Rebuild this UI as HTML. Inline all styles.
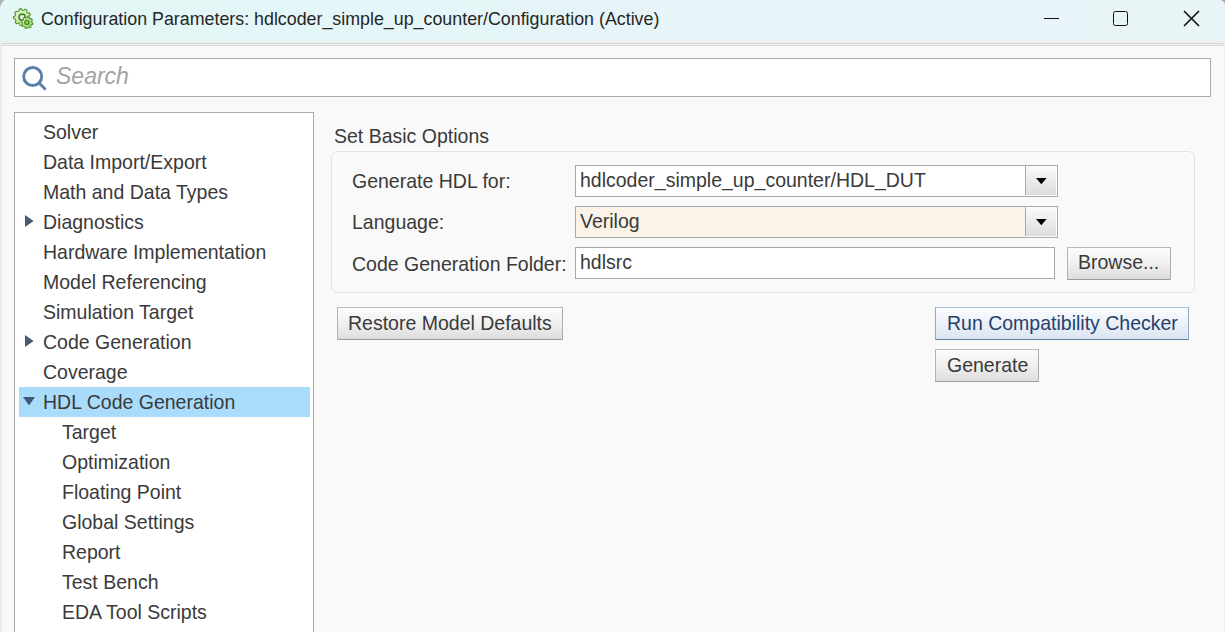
<!DOCTYPE html>
<html><head><meta charset="utf-8">
<style>
*{box-sizing:border-box;margin:0;padding:0}
html,body{width:1225px;height:632px;overflow:hidden}
body{position:relative;background:#f9f9f9;font-family:"Liberation Sans",sans-serif;color:#3a3a3a}
.a{position:absolute;white-space:pre}
.t{font-size:21px;line-height:normal;transform:scaleX(0.9286);transform-origin:0 0;margin-top:-1.36px}
#title{position:absolute;left:-1px;top:0;width:1229px;height:41px;background:linear-gradient(90deg,#e3f7f7 0%,#e4f6f7 35%,#e7f4f8 55%,#e9f4f7 100%)}
#band{position:absolute;left:0;top:41px;width:1225px;height:5px;background:#eeeeee}
#bandbox{position:absolute;left:2px;top:43px;width:1221px;height:3px;border:1px solid #d6d6d6;background:#f2f2f2}
#lstrip{position:absolute;left:0;top:41px;width:2px;height:591px;background:#ececec}
#rstrip{position:absolute;left:1224px;top:41px;width:1px;height:591px;background:#f0f0f0}
#search{position:absolute;left:14px;top:58px;width:1197px;height:39px;background:#fff;border:1px solid #aaaaaa}
#tree{position:absolute;left:14px;top:112px;width:300px;height:540px;background:#fff;border:1px solid #acacac}
#sel{position:absolute;left:19px;top:387px;width:291px;height:30px;background:#a9dbfa}
.tri{position:absolute;width:0;height:0}
#group{position:absolute;left:331px;top:151px;width:864px;height:142px;border:1px solid #e2e2e2;border-radius:6.5px}
.field{position:absolute;background:#fff;border:1px solid #a9a9a9}
.ddbtn{position:absolute;top:0;right:1px;width:31px;height:29px;border-left:1px solid #a9a9a9;background:linear-gradient(#fbfbfb,#dcdcdc);box-shadow:1px 1px 0 #fdfdfd}
.btn{position:absolute;border:1px solid #adadad;border-color:#b9b9b9 #adadad #9c9c9c #b3b3b3;background:linear-gradient(#fcfcfc 0%,#f0f0f0 50%,#dddddd 100%)}
</style></head><body>
<div id="title">
  <svg class="a" style="left:13px;top:7px" width="22" height="22" viewBox="0 0 22 22">
    <defs><linearGradient id="gg" x1="0" y1="0" x2="1" y2="1"><stop offset="0" stop-color="#f4fbe8"/><stop offset="1" stop-color="#b4de7a"/></linearGradient>
    <linearGradient id="gs" x1="0" y1="0" x2="1" y2="1"><stop offset="0" stop-color="#eef9dc"/><stop offset="1" stop-color="#9cd24e"/></linearGradient></defs><g transform="translate(0.4,0.8)">
    <path d="M16.68 9.94 L18.16 10.95 L17.56 12.90 L15.76 12.90 L14.70 14.30 L15.18 16.03 L13.47 17.13 L12.10 15.98 L10.38 16.37 L9.64 18.00 L7.62 17.74 L7.31 15.98 L5.75 15.18 L4.13 15.95 L2.74 14.46 L3.64 12.90 L2.96 11.28 L1.22 10.84 L1.12 8.80 L2.81 8.19 L3.32 6.51 L2.28 5.05 L3.51 3.43 L5.20 4.04 L6.67 3.09 L6.81 1.30 L8.80 0.85 L9.70 2.40 L11.44 2.62 L12.70 1.34 L14.51 2.27 L14.20 4.04 L15.39 5.32 L17.18 5.15 L17.97 7.03 L16.59 8.18Z" fill="url(#gg)" stroke="#4f9a2e" stroke-width="1.1" stroke-linejoin="round"/>
    <circle cx="9.7" cy="9.4" r="3.1" fill="#e6f6ef" stroke="#3d8a2a" stroke-width="1.6"/>
    <path d="M19.39 14.56 L20.59 15.19 L20.27 16.73 L18.93 16.85 L18.19 17.95 L18.59 19.24 L17.28 20.11 L16.24 19.24 L14.94 19.49 L14.31 20.69 L12.77 20.37 L12.65 19.03 L11.55 18.29 L10.26 18.69 L9.39 17.38 L10.26 16.34 L10.01 15.04 L8.81 14.41 L9.13 12.87 L10.47 12.75 L11.21 11.65 L10.81 10.36 L12.12 9.49 L13.16 10.36 L14.46 10.11 L15.09 8.91 L16.63 9.23 L16.75 10.57 L17.85 11.31 L19.14 10.91 L20.01 12.22 L19.14 13.26Z" fill="url(#gs)" stroke="#4f9a2e" stroke-width="1.1" stroke-linejoin="round"/>
    <circle cx="14.5" cy="14.6" r="2.1" fill="#9cd84c" stroke="#3d8a2a" stroke-width="1.3"/>
  </g></svg>
  <div class="a" style="left:42px;top:8.5px;font-size:17.84px;color:#262626">Configuration Parameters: hdlcoder_simple_up_counter/Configuration (Active)</div>
  <div class="a" style="left:1045px;top:17.6px;width:15px;height:1.5px;background:#111"></div>
  <div class="a" style="left:1114px;top:11px;width:15px;height:15px;border:1.6px solid #111;border-radius:2.5px"></div>
  <svg class="a" style="left:1184px;top:10px" width="17" height="17" viewBox="0 0 17 17"><path d="M1 1L16 16M16 1L1 16" stroke="#111" stroke-width="1.6"/></svg>
</div>
<svg class="a" style="left:0;top:0" width="1225" height="12" viewBox="0 0 1225 12"><path d="M0 0H5Q1.2 1.6 0 8Z" fill="#b0b0b0"/><path d="M1225 0H1221Q1224 1 1225 4Z" fill="#a8a8a8"/></svg>
<div id="band"></div>
<div id="bandbox"></div>
<div id="lstrip"></div>
<div id="rstrip"></div>

<div id="search">
  <svg class="a" style="left:7px;top:6px" width="28" height="28" viewBox="0 0 28 28">
    <circle cx="10.7" cy="11.5" r="9" fill="none" stroke="#5b7fa8" stroke-width="2.9"/>
    <path d="M17 18 L22.8 23.8" stroke="#5b7fa8" stroke-width="2.9" stroke-linecap="round"/>
  </svg>
  <div class="a" style="left:41px;top:4.4px;font-size:23px;font-style:italic;color:#a3a3a3">Search</div>
</div>

<div id="tree"></div>
<div id="sel"></div>

<div class="a t" style="left:42.5px;top:121.35px">Solver</div>
<div class="a t" style="left:42.5px;top:151.35px">Data Import/Export</div>
<div class="a t" style="left:42.5px;top:181.35px">Math and Data Types</div>
<div class="a t" style="left:42.5px;top:211.35px">Diagnostics</div>
<svg class="a" style="left:25px;top:215px" width="9" height="12" viewBox="0 0 9 12"><path d="M0 0L8.6 6L0 12Z" fill="#475b73"/></svg>
<div class="a t" style="left:42.5px;top:241.35px">Hardware Implementation</div>
<div class="a t" style="left:42.5px;top:271.35px">Model Referencing</div>
<div class="a t" style="left:42.5px;top:301.35px">Simulation Target</div>
<div class="a t" style="left:42.5px;top:331.35px">Code Generation</div>
<svg class="a" style="left:25px;top:335px" width="9" height="12" viewBox="0 0 9 12"><path d="M0 0L8.6 6L0 12Z" fill="#475b73"/></svg>
<div class="a t" style="left:42.5px;top:361.35px">Coverage</div>
<div class="a t" style="left:42.5px;top:391.35px">HDL Code Generation</div>
<svg class="a" style="left:23px;top:397px" width="12" height="8" viewBox="0 0 12 8"><path d="M0 0H12L6 8.4Z" fill="#3d5a7a"/></svg>
<div class="a t" style="left:62px;top:421.35px">Target</div>
<div class="a t" style="left:62px;top:451.35px">Optimization</div>
<div class="a t" style="left:62px;top:481.35px">Floating Point</div>
<div class="a t" style="left:62px;top:511.35px">Global Settings</div>
<div class="a t" style="left:62px;top:541.35px">Report</div>
<div class="a t" style="left:62px;top:571.35px">Test Bench</div>
<div class="a t" style="left:62px;top:601.35px">EDA Tool Scripts</div>

<div class="a t" style="left:334px;top:124.9px">Set Basic Options</div>
<div id="group"></div>
<div class="a t" style="left:352px;top:170px">Generate HDL for:</div>
<div class="a t" style="left:352px;top:211.2px">Language:</div>
<div class="a t" style="left:352px;top:253.2px">Code Generation Folder:</div>

<div class="field" style="left:575px;top:165px;width:483px;height:32px">
  <div class="a t" style="left:4px;top:3.4px">hdlcoder<span style="position:relative;top:-1.5px">_</span>simple<span style="position:relative;top:-1.5px">_</span>up<span style="position:relative;top:-1.5px">_</span>counter/HDL<span style="position:relative;top:-1.5px">_</span>DUT</div>
  <div class="ddbtn"><svg class="a" style="left:9.5px;top:12.2px" width="11" height="7" viewBox="0 0 11 7"><path d="M0 0H10.6L5.3 6.2Z" fill="#000"/></svg></div>
</div>
<div class="field" style="left:575px;top:206px;width:483px;height:32px;background:#fcf3e8">
  <div class="a t" style="left:4px;top:3px">Verilog</div>
  <div class="ddbtn"><svg class="a" style="left:9.5px;top:12.2px" width="11" height="7" viewBox="0 0 11 7"><path d="M0 0H10.6L5.3 6.2Z" fill="#000"/></svg></div>
</div>
<div class="field" style="left:575px;top:247px;width:480px;height:32px">
  <div class="a t" style="left:4px;top:3.6px">hdlsrc</div>
</div>
<div class="btn" style="left:1067px;top:247px;width:104px;height:33px">
  <div class="a t" style="left:10px;top:3.4px">Browse...</div>
</div>
<div class="btn" style="left:337px;top:307px;width:226px;height:33px">
  <div class="a t" style="left:10px;top:4.2px">Restore Model Defaults</div>
</div>
<div class="btn" style="left:935px;top:307px;width:254px;height:33px;border-color:#a6bfda #90aac7 #62809f #90aac7;background:linear-gradient(#fafcfe 0%,#edf2f9 45%,#dbe5f1 100%)">
  <div class="a t" style="left:11px;top:4.3px;color:#24406d">Run Compatibility Checker</div>
</div>
<div class="btn" style="left:935px;top:349px;width:104px;height:33px">
  <div class="a t" style="left:11px;top:4.4px">Generate</div>
</div>
</body></html>
